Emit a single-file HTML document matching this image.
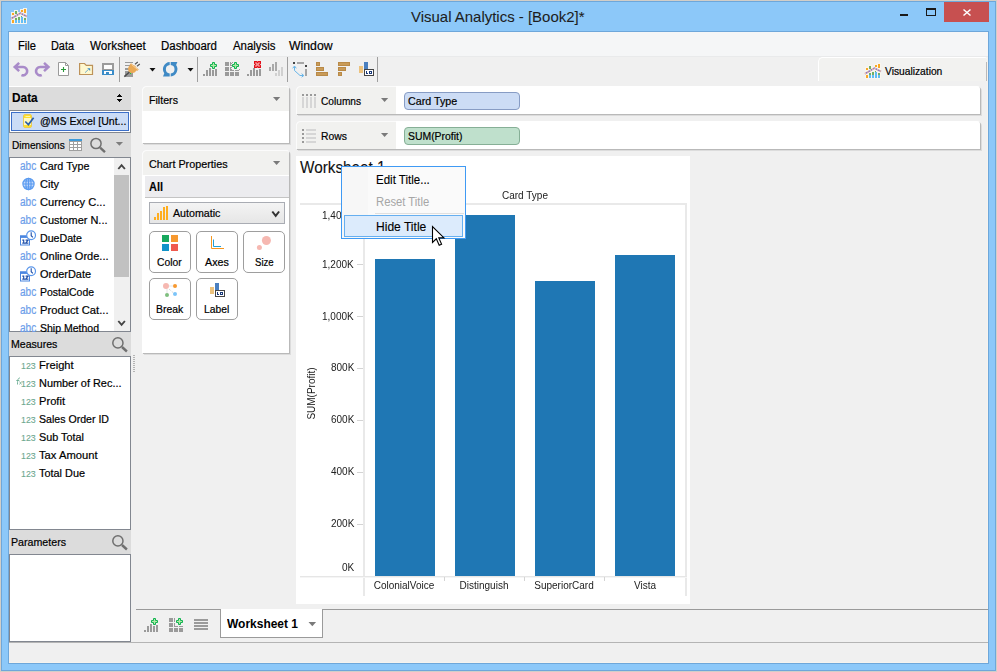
<!DOCTYPE html>
<html><head><meta charset="utf-8"><title>Visual Analytics</title>
<style>
*{box-sizing:border-box;margin:0;padding:0}
html,body{width:997px;height:672px;overflow:hidden}
body{font-family:"Liberation Sans",sans-serif;color:#000;background:#d2cec8;position:relative}
.a{position:absolute}
.t{position:absolute;white-space:nowrap;line-height:1;transform-origin:0 0;display:block}
.u{-webkit-text-stroke:.2px currentColor}
.g{will-change:transform}
.hdr{position:absolute;left:9px;width:122px;background:#dcdcdc}
.lb{position:absolute;left:9px;width:122px;background:#fff;border:1px solid #828790}
.card{position:absolute;background:#fff;border-radius:5px 3px 0 0;box-shadow:1px 1px 0 #b9b9b9,2px 2px 0 #dcdcdc}
.chd{position:absolute;left:0;top:0;background:#f1f1ef;border-radius:5px 0 0 0;border-left:1px solid #fbfbfb;border-top:1px solid #fbfbfb}
.btn{position:absolute;width:42px;height:42px;border:1px solid #9e9e9e;border-radius:5px;background:#fff}
.sep{position:absolute;top:57px;width:1px;height:25px;background:#9f9f9f}
.bar{position:absolute;background:#1f77b4;width:60px}
.gl{position:absolute;background:#e9e9e9}
</style></head><body>
<!-- window frame -->
<div class="a" style="left:1px;top:1px;width:995px;height:670px;background:#6ea7da"></div>
<div class="a" style="left:2px;top:2px;width:993px;height:668px;background:#8cc8f9"></div>
<div class="a" style="left:8px;top:31px;width:981px;height:633px;background:#6ea7da"></div>
<div class="a" style="left:9px;top:32px;width:979px;height:631px;background:#f0f0f0"></div>
<div class="a" style="left:987px;top:57px;width:1px;height:606px;background:#f6f3ee"></div><div class="a" style="left:9px;top:662px;width:979px;height:1px;background:#f6f3ee"></div>
<!-- caption buttons -->
<div class="a" style="left:900px;top:14px;width:8px;height:2px;background:#1a1a1a"></div>
<div class="a" style="left:926px;top:8px;width:10px;height:8px;border:1px solid #1a1a1a;border-top-width:2px"></div>
<div class="a" style="left:944px;top:2px;width:45px;height:20px;background:#c75050"></div>
<!-- menubar / toolbar -->
<div class="a" style="left:9px;top:32px;width:979px;height:24px;background:#f5f6f7"></div>
<div class="a" style="left:9px;top:56px;width:979px;height:1px;background:#e9eaeb"></div>
<div class="sep" style="left:119px"></div><div class="sep" style="left:197px"></div><div class="sep" style="left:287px"></div><div class="sep" style="left:377px"></div>
<!-- visualization tab -->
<div class="a" style="left:818px;top:57px;width:169px;height:24px;background:#f2f2f0;border-left:1px solid #fff;border-top:1px solid #fff;border-radius:5px 2px 0 0"></div>
<div class="a" style="left:986px;top:62px;width:1px;height:19px;background:#b9b9b9"></div>
<!-- left pane -->
<div class="a" style="left:9px;top:86px;width:122px;height:1px;background:#fff"></div>
<div class="hdr" style="top:87px;height:23px"></div>
<div class="a" style="left:9px;top:110px;width:122px;height:23px;border:1px solid #828790;background:#fff"></div>
<div class="a" style="left:11px;top:112px;width:118px;height:19px;border:1px solid #3c6fc8;background:#cbdcf6"></div>
<div class="hdr" style="top:133px;height:24px"></div>
<div class="lb" style="top:157px;height:175px"></div>
<div class="a" style="left:114px;top:158px;width:16px;height:173px;background:#f0f0f0"></div>
<div class="a" style="left:114px;top:175px;width:15px;height:102px;background:#c1c1c1"></div>
<div class="hdr" style="top:332px;height:24px"></div>
<div class="lb" style="top:356px;height:174px"></div>
<div class="hdr" style="top:530px;height:24px"></div>
<div class="lb" style="top:554px;height:88px"></div>
<!-- filters card -->
<div class="card" style="left:142px;top:86px;width:147px;height:57px"><div class="chd" style="width:147px;height:25px;border-radius:5px 3px 0 0"></div></div>
<!-- chart properties card -->
<div class="card" style="left:142px;top:150px;width:147px;height:203px"><div class="chd" style="width:147px;height:25px;border-radius:5px 3px 0 0"></div>
<div class="a" style="left:3px;top:26px;width:144px;height:21px;background:#ececef"></div>
<div class="a" style="left:3px;top:47px;width:144px;height:1px;background:#c4c4c4"></div>
<div class="a" style="left:7px;top:52px;width:136px;height:22px;border:1px solid #a9acb3;background:linear-gradient(#f4f4f4,#e6e6e6)"></div>
</div>
<div class="btn" style="left:149px;top:231px"></div><div class="btn" style="left:196px;top:231px"></div><div class="btn" style="left:243px;top:231px"></div>
<div class="btn" style="left:149px;top:278px"></div><div class="btn" style="left:196px;top:278px"></div>
<!-- columns / rows -->
<div class="card" style="left:296px;top:86px;width:684px;height:28px"><div class="chd" style="width:100px;height:28px"></div></div>
<div class="card" style="left:296px;top:121px;width:684px;height:28px"><div class="chd" style="width:100px;height:28px"></div></div>
<div class="a" style="left:404px;top:92px;width:116px;height:18px;border:1px solid #879cc4;border-radius:4px;background:#ccdcf5"></div>
<div class="a" style="left:404px;top:127px;width:116px;height:18px;border:1px solid #86af96;border-radius:4px;background:#bfe0cc"></div>
<!-- chart -->
<div class="a" style="left:296px;top:156px;width:394px;height:448px;background:#fff"></div>
<div class="gl" style="left:300px;top:203px;width:387px;height:2px"></div>
<div class="gl" style="left:685px;top:204px;width:2px;height:392px"></div>
<div class="gl" style="left:363px;top:204px;width:2px;height:392px"></div>
<div class="gl" style="left:300px;top:576px;width:387px;height:1px;background:#e6e6e6"></div><div class="gl" style="left:300px;top:577px;width:387px;height:1px;background:#f5f5f5"></div>
<div class="gl" style="left:444px;top:577px;width:1px;height:4px;background:#d4d4d4"></div><div class="gl" style="left:524px;top:577px;width:1px;height:4px;background:#d4d4d4"></div><div class="gl" style="left:604px;top:577px;width:1px;height:4px;background:#d4d4d4"></div>
<div class="gl" style="left:357px;top:264px;width:6px;height:1px;background:#d4d4d4"></div><div class="gl" style="left:357px;top:316px;width:6px;height:1px;background:#d4d4d4"></div>
<div class="gl" style="left:357px;top:368px;width:6px;height:1px;background:#d4d4d4"></div><div class="gl" style="left:357px;top:420px;width:6px;height:1px;background:#d4d4d4"></div>
<div class="gl" style="left:357px;top:472px;width:6px;height:1px;background:#d4d4d4"></div><div class="gl" style="left:357px;top:524px;width:6px;height:1px;background:#d4d4d4"></div>
<div class="bar" style="left:375px;top:259px;height:317px"></div>
<div class="bar" style="left:455px;top:215px;height:361px"></div>
<div class="bar" style="left:535px;top:281px;height:295px"></div>
<div class="bar" style="left:615px;top:255px;height:321px"></div>
<!-- sheet tab bar -->
<div class="a" style="left:136px;top:609px;width:852px;height:1px;background:#9a9a9a"></div>
<div class="a" style="left:220px;top:609px;width:103px;height:29px;background:#fff;border:1px solid #9a9a9a;border-top:none"></div>
<div class="a" style="left:9px;top:642px;width:979px;height:1px;background:#b4b4b4"></div>
<svg class="a" style="left:0;top:0" width="997" height="672" viewBox="0 0 997 672">
<defs>
<g id="appico">
 <path d="M0 4h3v-2h4v2h2v-3h3v-1h4v16h-16z" fill="#fbf6ee" fill-opacity=".92"/>
 <g shape-rendering="crispEdges">
 <rect x="1" y="5" width="2" height="2" fill="#f9a825"/><rect x="1" y="12" width="2" height="3" fill="#f9a825"/>
 <rect x="4" y="3" width="2" height="3" fill="#72b066"/><rect x="4" y="10" width="2" height="2" fill="#72b066"/><rect x="4" y="12" width="2" height="3" fill="#62bdf5"/>
 <rect x="7" y="9" width="2" height="3" fill="#72b066"/><rect x="7" y="12" width="2" height="3" fill="#62bdf5"/>
 <rect x="10" y="2" width="2" height="2" fill="#f9a825"/><rect x="10" y="9" width="2" height="6" fill="#62bdf5"/><rect x="10" y="8" width="1" height="1" fill="#72b066"/>
 <rect x="13" y="1" width="2" height="4" fill="#f9a825"/><rect x="13" y="10" width="2" height="2" fill="#72b066"/><rect x="13" y="12" width="2" height="3" fill="#62bdf5"/>
 </g>
 <path d="M0 10.7L9.4 5.1L16 8.6" fill="none" stroke="#8b78c4" stroke-width="1.7"/>
 <path d="M0 10.7L9.4 5.1L16 8.6" fill="none" stroke="#f9c9a8" stroke-width="1.7" stroke-dasharray="1.2 1.6"/>
</g>
<g id="plus"><path d="M2.5 0.5h2v2h2v2h-2v2h-2v-2h-2v-2h2z" fill="#b2e9a6" stroke="#10b250" stroke-width="1"/></g>
<g id="bars5" fill="#9a9a9a" shape-rendering="crispEdges">
 <rect x="0" y="12" width="2" height="2"/><rect x="3" y="8" width="2" height="6"/><rect x="6" y="6" width="2" height="8"/><rect x="9" y="8" width="2" height="6"/><rect x="12" y="7" width="2" height="7"/>
</g>
<g id="grid9" fill="#9a9a9a" shape-rendering="crispEdges">
 <rect x="0" y="0" width="4" height="4"/><rect x="5" y="0" width="4" height="4"/><rect x="10" y="0" width="4" height="4"/>
 <rect x="0" y="5" width="4" height="4"/><rect x="5" y="5" width="4" height="4"/><rect x="10" y="5" width="4" height="4"/>
 <rect x="0" y="10" width="4" height="4"/><rect x="5" y="10" width="4" height="4"/><rect x="10" y="10" width="4" height="4"/>
</g>
<g id="lblico" shape-rendering="crispEdges">
 <rect x="0" y="4" width="4" height="7" fill="#ecc27d"/><rect x="5" y="0" width="4" height="8" fill="#4a7fbf"/>
 <rect x="5.5" y="7.5" width="9" height="6" fill="#fff" stroke="#444" stroke-width="1"/>
 <rect x="7" y="9" width="1" height="3" fill="#1a3a7a"/><rect x="7" y="11" width="2" height="1" fill="#1a3a7a"/><rect x="10" y="9" width="3" height="3" fill="#1a3a7a"/><rect x="11" y="10" width="1" height="1" fill="#fff"/>
</g>
<g id="mag"><circle cx="6" cy="6" r="5.1" fill="none" stroke="#6f6f6f" stroke-width="1.5"/><path d="M10.1 10.1L15 14.6" stroke="#6f6f6f" stroke-width="2.4" stroke-linecap="butt"/></g>
<g id="abcdate">
 <rect x="0.5" y="5.5" width="9" height="9" fill="#fff" stroke="#4a86e0"/><rect x="0" y="5" width="10" height="2.4" fill="#4a86e0"/>
 <path d="M2.3 9.6h1.4v3.2M2.3 12.6h2.6M5.6 9.6h2.6L5.6 12.6h2.8" stroke="#1f4fa8" fill="none" stroke-width="1.15"/>
 <circle cx="11.1" cy="4.7" r="4.4" fill="#fff" stroke="#5a96ea" stroke-width="1.2"/><path d="M11.2 1.8V5.2L12.9 6.8" stroke="#1f4fa8" fill="none" stroke-width="1.1"/>
</g>
</defs>
<!-- title icon, viz icon -->
<use href="#appico" x="11" y="8"/>
<use href="#appico" x="865" y="63"/>
<!-- close X -->
<path d="M963.5 9.5L970.5 15.5M970.5 9.5L963.5 15.5" stroke="#fff" stroke-width="1.5"/>
<!-- TOOLBAR -->
<g id="undo"><path d="M12.9 67L18.3 62L20 63.7L18 65.7V68.3L20 70.3L18.3 72Z" fill="#a98bc9"/><path d="M17 67H23A4.2 4.2 0 1 1 21.4 75.1" fill="none" stroke="#a98bc9" stroke-width="2.6"/></g>
<use href="#undo" transform="translate(63.2 0) scale(-1 1)"/>
<!-- new doc -->
<path d="M58.5 62.5H65.5L68.5 65.5V75.5H58.5Z" fill="#fff" stroke="#9a9a9a"/><path d="M65.5 62.5V65.5H68.5" fill="none" stroke="#9a9a9a"/>
<path d="M63.5 67v5M61 69.5h5" stroke="#2a9a3a" stroke-width="1.1"/>
<!-- open folder -->
<path d="M79.6 63.5H84.5L86.3 65.4H92.5V74.5H79.6Z" fill="#fef8d0" stroke="#bd9259" stroke-width="1.2"/>
<path d="M85 72.7L88.6 69.3" fill="none" stroke="#3d8fc8" stroke-width="1" stroke-dasharray="1 .6"/><path d="M87.2 68.2H90.2V71z" fill="#3d8fc8"/>
<!-- save -->
<g shape-rendering="crispEdges"><rect x="102" y="63" width="12" height="7" fill="#9b9b9b"/><rect x="104" y="65" width="8" height="4" fill="#fdfdfd"/><rect x="102" y="70" width="12" height="5" fill="#3a8cc8"/><rect x="104" y="71" width="8" height="3" fill="#fdfdfd"/><rect x="106" y="72" width="3" height="2" fill="#3a8cc8"/></g>
<!-- connect (doc + plug) -->
<g shape-rendering="crispEdges"><rect x="125" y="62" width="8" height="1" fill="#9a9a9a"/><rect x="125" y="65" width="8" height="1" fill="#9a9a9a"/><rect x="125" y="68" width="8" height="2" fill="#9a9a9a"/><rect x="125" y="71" width="8" height="6" fill="#9a9a9a"/></g>
<path d="M124.3 76.6L129.5 72" stroke="#4d4d4d" stroke-width="1.5"/>
<path d="M135 64.2L137.8 62M137 66.2L139.8 64" stroke="#555" stroke-width="1.2"/>
<circle cx="132.2" cy="69" r="4.1" fill="#eaa955"/>
<path d="M131 63.3L138.8 69.6L137 71L129.6 65z" fill="#eaa955"/>
<path d="M131.6 64.6L137.8 69.6" stroke="#f6d4a4" stroke-width=".9"/>
<rect x="130" y="73" width="1" height="1" fill="#1fd01f"/>
<path d="M149.5 68h6l-3 3.5z" fill="#111"/><path d="M187.5 68h6l-3 3.5z" fill="#111"/>
<!-- refresh -->
<path id="rf" d="M169.7 62A7.2 7.2 0 0 0 164.3 73.3L163 76.4H169.7V73.5A4.33 4.33 0 0 1 169.7 64.9Z" fill="#3f8ac5"/>
<use href="#rf" transform="rotate(180 170.2 69.2)"/>
<!-- new worksheet / dashboard / clear / bars -->
<use href="#bars5" x="203" y="62"/><use href="#plus" x="210" y="62"/>
<use href="#grid9" x="225" y="62"/><rect x="231" y="61" width="9" height="9" fill="#f0f0f0"/><path d="M231.5 70v-7.5h2M236 70.5h3.5v-2" fill="none" stroke="#9a9a9a" stroke-dasharray="1 1"/><use href="#plus" x="232" y="62"/>
<use href="#bars5" x="247" y="62"/>
<path d="M254.6 61.6h2l.9 1 .9-1h2v2l-1 .9 1 .9v2h-2l-.9-1-.9 1h-2v-2l1-.9-1-.9z" fill="#f59a9a" stroke="#e30f19" stroke-width="1.2" stroke-linejoin="miter"/>
<g shape-rendering="crispEdges"><rect x="269" y="67" width="2" height="4" fill="#a9a9a9"/><rect x="272" y="64" width="2" height="7" fill="#a9a9a9"/><rect x="275" y="62" width="2" height="9" fill="#a9a9a9"/>
<rect x="275" y="73" width="2" height="3" fill="#d0d0d0"/><rect x="278" y="70" width="2" height="6" fill="#d0d0d0"/><rect x="281" y="67" width="2" height="9" fill="#d0d0d0"/></g>
<!-- swap -->
<g shape-rendering="crispEdges"><rect x="293" y="62" width="2" height="2" fill="#444"/><rect x="297" y="62" width="7" height="2" fill="#a6a6a6"/><rect x="305" y="65" width="2" height="2" fill="#444"/><rect x="305" y="69" width="2" height="7" fill="#a6a6a6"/></g>
<path d="M294.5 67V70.5L300 75.5H303" fill="none" stroke="#58aee6" stroke-width=".9"/><path d="M292.7 68.3L294.5 66L296.3 68.3M301.6 73.7L303.8 75.5L301.6 77.2" fill="none" stroke="#58aee6" stroke-width=".9"/>
<!-- sort asc / desc -->
<g fill="#c99b58" stroke="#b98a48" stroke-width="1" shape-rendering="crispEdges">
<rect x="316.5" y="62.5" width="3" height="3"/><rect x="316.5" y="67.5" width="7" height="3"/><rect x="316.5" y="72.5" width="11" height="3"/>
<rect x="338.5" y="62.5" width="11" height="3"/><rect x="338.5" y="67.5" width="7" height="3"/><rect x="338.5" y="72.5" width="3" height="3"/></g>
<use href="#lblico" x="359" y="62"/>
<!-- LEFT PANE icons -->
<g shape-rendering="crispEdges" fill="#0a0a0a"><rect x="117" y="97" width="5" height="2" fill="#e9e9e9"/><rect x="119" y="94" width="1" height="1"/><rect x="118" y="95" width="3" height="1"/><rect x="117" y="96" width="5" height="1"/><rect x="117" y="99" width="5" height="1"/><rect x="118" y="100" width="3" height="1"/><rect x="119" y="101" width="1" height="1"/></g>
<!-- datasource icon -->
<rect x="23.5" y="114.5" width="8" height="13" rx="1.5" fill="#fdf8c2" stroke="#e8c955"/><rect x="24" y="115" width="7" height="3" fill="#fddf2f"/><rect x="24" y="125" width="7" height="2" fill="#fddf2f"/><rect x="25.5" y="116" width="4.5" height="1" fill="#fff4a8"/>
<path d="M25.3 121.5L28.4 124.6L33.6 117.8" fill="none" stroke="#2a5fa8" stroke-width="1.7"/>
<!-- table icon -->
<g shape-rendering="crispEdges"><rect x="69" y="139" width="13" height="12" fill="#9f9f9f"/><rect x="69" y="139" width="13" height="2" fill="#3f9bd9"/>
<rect x="70" y="142" width="3" height="2" fill="#fff"/><rect x="74" y="142" width="3" height="2" fill="#fff"/><rect x="78" y="142" width="3" height="2" fill="#fff"/>
<rect x="70" y="145" width="3" height="2" fill="#fff"/><rect x="74" y="145" width="3" height="2" fill="#fff"/><rect x="78" y="145" width="3" height="2" fill="#fff"/>
<rect x="70" y="148" width="3" height="2" fill="#fff"/><rect x="74" y="148" width="3" height="2" fill="#fff"/><rect x="78" y="148" width="3" height="2" fill="#fff"/></g>
<use href="#mag" x="90" y="137.5"/>
<path d="M115.8 142h7.2l-3.6 3.8z" fill="#7d7d7d"/>
<use href="#mag" x="111.9" y="336.9"/><use href="#mag" x="111.9" y="534.9"/>
<!-- scrollbar arrows -->
<path d="M118.3 169L121.6 165.2L124.9 169" fill="none" stroke="#444" stroke-width="1.9"/>
<path d="M118.3 321L121.6 324.8L124.9 321" fill="none" stroke="#444" stroke-width="1.9"/>
<!-- globe -->
<g fill="none" stroke="#5b9bf0" stroke-width="1.2"><circle cx="28.5" cy="184" r="5.6" fill="#c3d9fb"/><ellipse cx="28.5" cy="184" rx="2.6" ry="5.6"/><path d="M23 184h11M24 181h9M24 187h9M28.5 178.4v11.2"/></g>
<use href="#abcdate" x="20" y="230.5"/><use href="#abcdate" x="20" y="266.5"/>
<!-- fx marker -->
<path d="M17.5 384.5c0-5 .5-6.5 2.5-6.5M16.3 380.5h3" fill="none" stroke="#6aab92" stroke-width=".9"/><path d="M19.5 381.5l2 3M21.5 381.5l-2 3" stroke="#6aab92" stroke-width=".7"/>
<!-- CARD icons -->
<path d="M273 97h7.2l-3.6 4z" fill="#7a7a7a"/><path d="M273 161h7.2l-3.6 4z" fill="#7a7a7a"/>
<path d="M381 98h7.2l-3.6 4z" fill="#7a7a7a"/><path d="M381 133h7.2l-3.6 4z" fill="#7a7a7a"/>
<g shape-rendering="crispEdges">
<rect x="302" y="94" width="2" height="2" fill="#9a9a9a"/><rect x="306" y="94" width="2" height="2" fill="#9a9a9a"/><rect x="310" y="94" width="2" height="2" fill="#9a9a9a"/><rect x="314" y="94" width="2" height="2" fill="#9a9a9a"/>
<rect x="302" y="97" width="2" height="11" fill="#d6d6d6"/><rect x="306" y="97" width="2" height="11" fill="#d6d6d6"/><rect x="310" y="97" width="2" height="11" fill="#d6d6d6"/><rect x="314" y="97" width="2" height="11" fill="#d6d6d6"/>
<rect x="302" y="129" width="2" height="2" fill="#9a9a9a"/><rect x="302" y="133" width="2" height="2" fill="#9a9a9a"/><rect x="302" y="137" width="2" height="2" fill="#9a9a9a"/><rect x="302" y="141" width="2" height="2" fill="#9a9a9a"/>
<rect x="306" y="129" width="10" height="2" fill="#d6d6d6"/><rect x="306" y="133" width="10" height="2" fill="#d6d6d6"/><rect x="306" y="137" width="10" height="2" fill="#d6d6d6"/><rect x="306" y="141" width="10" height="2" fill="#d6d6d6"/>
<!-- automatic icon -->
<rect x="154" y="217" width="2" height="3" fill="#ffae1f"/><rect x="157" y="213" width="2" height="7" fill="#ffae1f"/><rect x="160" y="211" width="2" height="9" fill="#ffae1f"/><rect x="163" y="207" width="2" height="13" fill="#ffae1f"/><rect x="166" y="206" width="2" height="14" fill="#ffae1f"/>
<!-- color squares -->
<rect x="162" y="235" width="7" height="7" fill="#17a85d"/><rect x="171" y="235" width="7" height="7" fill="#f7992f"/><rect x="162" y="244" width="7" height="7" fill="#1193c9"/><rect x="171" y="244" width="7" height="7" fill="#ef5a4f"/>
</g>
<path d="M272.3 211.5L275.7 215.8L279.1 211.5" fill="none" stroke="#333" stroke-width="2"/>
<!-- axes -->
<path d="M211.5 236V248.5H224" fill="none" stroke="#f5961f" stroke-width="1"/><path d="M213.5 239.5V246.5H221" fill="none" stroke="#1ea0d8" stroke-width="1"/>
<!-- size -->
<circle cx="266.4" cy="240.5" r="4.5" fill="#f6b8b1"/><circle cx="259.4" cy="247.5" r="2.5" fill="#f6b8b1"/>
<!-- break -->
<circle cx="166" cy="286" r="3" fill="#f6b8b1"/><circle cx="175" cy="286" r="2" fill="#f7992f"/><circle cx="167" cy="295" r="2" fill="#7fbf7f"/><circle cx="175" cy="294" r="2" fill="#7cc4f8"/>
<path d="M169.5 286H172.5M167 289.5V292.5M169 289L173 292.5" stroke="#bdbdbd" stroke-width=".8" stroke-dasharray="1 1"/>
<use href="#lblico" x="210" y="283"/>
<!-- splitter grip -->
<path d="M134 355V372" stroke="#b4b4b4" stroke-width="2" stroke-dasharray="1 1"/>
<!-- TAB BAR icons -->
<use href="#bars5" x="144" y="618"/><use href="#plus" x="151" y="618"/>
<use href="#grid9" x="169" y="618"/><rect x="175" y="617" width="9" height="9" fill="#f0f0f0"/><use href="#plus" x="176" y="618"/>
<g shape-rendering="crispEdges" fill="#9a9a9a"><rect x="194" y="619" width="14" height="2"/><rect x="194" y="622" width="14" height="2"/><rect x="194" y="625" width="14" height="2"/><rect x="194" y="628" width="14" height="2"/></g>
<path d="M308.5 622h7.6l-3.8 4.2z" fill="#7a7a7a"/>
</svg>

<span class="t u" style="top:9.00px;font-size:15px;left:411px;transform:scaleX(0.9972);color:#1e1e1e;-webkit-text-stroke:.08px">Visual Analytics - [Book2]*</span>
<span class="t u" style="top:40.00px;font-size:12px;left:18.3px;transform:scaleX(0.9305);">File</span>
<span class="t u" style="top:40.00px;font-size:12px;left:51.3px;transform:scaleX(0.9070);">Data</span>
<span class="t u" style="top:40.00px;font-size:12px;left:89.9px;transform:scaleX(0.9765);">Worksheet</span>
<span class="t u" style="top:40.00px;font-size:12px;left:161.4px;transform:scaleX(0.9537);">Dashboard</span>
<span class="t u" style="top:40.00px;font-size:12px;left:232.5px;transform:scaleX(0.9510);">Analysis</span>
<span class="t u" style="top:40.00px;font-size:12px;left:289.4px;transform:scaleX(1.0214);">Window</span>
<span class="t u" style="top:66.00px;font-size:11px;left:885px;transform:scaleX(0.9308);">Visualization</span>
<span class="t u" style="top:92.00px;font-size:12px;left:12.4px;transform:scaleX(0.9879);font-weight:bold;-webkit-text-stroke:.12px">Data</span>
<span class="t u" style="top:116.00px;font-size:11px;left:39.8px;transform:scaleX(0.9597);">@MS Excel [Unt...</span>
<span class="t u" style="top:140.00px;font-size:11px;left:11.5px;transform:scaleX(0.9170);">Dimensions</span>
<span class="t u" style="top:339.00px;font-size:11px;left:11.3px;transform:scaleX(0.9607);">Measures</span>
<span class="t u" style="top:537.00px;font-size:11px;left:11.3px;transform:scaleX(0.9673);">Parameters</span>
<span class="t u" style="top:161.00px;font-size:11px;left:39.5px;transform:scaleX(0.9790);z-index:1">Card Type</span>
<span class="t u" style="top:160.00px;font-size:12px;left:19.9px;transform:scaleX(0.8368);color:#6c9eea;z-index:1">abc</span>
<span class="t u" style="top:179.00px;font-size:11px;left:39.5px;transform:scaleX(1.0025);z-index:1">City</span>
<span class="t u" style="top:197.00px;font-size:11px;left:39.5px;transform:scaleX(1.0109);z-index:1">Currency C...</span>
<span class="t u" style="top:196.00px;font-size:12px;left:19.9px;transform:scaleX(0.8368);color:#6c9eea;z-index:1">abc</span>
<span class="t u" style="top:215.00px;font-size:11px;left:39.5px;transform:scaleX(0.9947);z-index:1">Customer N...</span>
<span class="t u" style="top:214.00px;font-size:12px;left:19.9px;transform:scaleX(0.8368);color:#6c9eea;z-index:1">abc</span>
<span class="t u" style="top:233.00px;font-size:11px;left:39.5px;transform:scaleX(0.9673);z-index:1">DueDate</span>
<span class="t u" style="top:251.00px;font-size:11px;left:39.5px;transform:scaleX(1.0002);z-index:1">Online Orde...</span>
<span class="t u" style="top:250.00px;font-size:12px;left:19.9px;transform:scaleX(0.8368);color:#6c9eea;z-index:1">abc</span>
<span class="t u" style="top:269.00px;font-size:11px;left:39.5px;transform:scaleX(0.9930);z-index:1">OrderDate</span>
<span class="t u" style="top:287.00px;font-size:11px;left:39.5px;transform:scaleX(0.9495);z-index:1">PostalCode</span>
<span class="t u" style="top:286.00px;font-size:12px;left:19.9px;transform:scaleX(0.8368);color:#6c9eea;z-index:1">abc</span>
<span class="t u" style="top:305.00px;font-size:11px;left:39.5px;transform:scaleX(1.0184);z-index:1">Product Cat...</span>
<span class="t u" style="top:304.00px;font-size:12px;left:19.9px;transform:scaleX(0.8368);color:#6c9eea;z-index:1">abc</span>
<span class="t u" style="top:323.00px;font-size:11px;left:39.5px;transform:scaleX(0.9552);z-index:1">Ship Method</span>
<span class="t u" style="top:322.00px;font-size:12px;left:19.9px;transform:scaleX(0.8368);color:#6c9eea;z-index:1">abc</span>
<span class="t u" style="top:360.00px;font-size:11px;left:39.1px;transform:scaleX(1.0102);">Freight</span>
<span class="t u" style="top:362.00px;font-size:9px;left:20.8px;transform:scaleX(0.9780);color:#6ca78f;-webkit-text-stroke:.1px">123</span>
<span class="t u" style="top:378.00px;font-size:11px;left:39.1px;transform:scaleX(0.9923);">Number of Rec...</span>
<span class="t u" style="top:380.00px;font-size:9px;left:20.8px;transform:scaleX(0.9780);color:#6ca78f;-webkit-text-stroke:.1px">123</span>
<span class="t u" style="top:396.00px;font-size:11px;left:39.1px;transform:scaleX(1.0122);">Profit</span>
<span class="t u" style="top:398.00px;font-size:9px;left:20.8px;transform:scaleX(0.9780);color:#6ca78f;-webkit-text-stroke:.1px">123</span>
<span class="t u" style="top:414.00px;font-size:11px;left:39.1px;transform:scaleX(0.9622);">Sales Order ID</span>
<span class="t u" style="top:416.00px;font-size:9px;left:20.8px;transform:scaleX(0.9780);color:#6ca78f;-webkit-text-stroke:.1px">123</span>
<span class="t u" style="top:432.00px;font-size:11px;left:39.1px;transform:scaleX(0.9853);">Sub Total</span>
<span class="t u" style="top:434.00px;font-size:9px;left:20.8px;transform:scaleX(0.9780);color:#6ca78f;-webkit-text-stroke:.1px">123</span>
<span class="t u" style="top:450.00px;font-size:11px;left:39.1px;transform:scaleX(1.0177);">Tax Amount</span>
<span class="t u" style="top:452.00px;font-size:9px;left:20.8px;transform:scaleX(0.9780);color:#6ca78f;-webkit-text-stroke:.1px">123</span>
<span class="t u" style="top:468.00px;font-size:11px;left:39.1px;transform:scaleX(0.9896);">Total Due</span>
<span class="t u" style="top:470.00px;font-size:9px;left:20.8px;transform:scaleX(0.9780);color:#6ca78f;-webkit-text-stroke:.1px">123</span>
<span class="t u" style="top:95.00px;font-size:11px;left:148.6px;transform:scaleX(0.9682);">Filters</span>
<span class="t u" style="top:159.00px;font-size:11px;left:148.6px;transform:scaleX(0.9813);">Chart Properties</span>
<span class="t u" style="top:181.00px;font-size:12px;left:149px;transform:scaleX(0.9124);font-weight:bold;-webkit-text-stroke:.15px">All</span>
<span class="t u" style="top:208.00px;font-size:11px;left:172.7px;transform:scaleX(0.9689);">Automatic</span>
<span class="t u" style="top:257.00px;font-size:11px;left:157.4px;transform:scaleX(0.9355);">Color</span>
<span class="t u" style="top:257.00px;font-size:11px;left:204.9px;transform:scaleX(0.9727);">Axes</span>
<span class="t u" style="top:257.00px;font-size:11px;left:254.6px;transform:scaleX(0.8736);">Size</span>
<span class="t u" style="top:304.00px;font-size:11px;left:156.3px;transform:scaleX(0.9461);">Break</span>
<span class="t u" style="top:304.00px;font-size:11px;left:204.2px;transform:scaleX(0.9360);">Label</span>
<span class="t u" style="top:96.00px;font-size:11px;left:320.5px;transform:scaleX(0.9238);">Columns</span>
<span class="t u" style="top:131.00px;font-size:11px;left:320.5px;transform:scaleX(0.9413);">Rows</span>
<span class="t u" style="top:96.00px;font-size:11px;left:407.8px;transform:scaleX(0.9731);">Card Type</span>
<span class="t u" style="top:131.00px;font-size:11px;left:407.8px;transform:scaleX(0.9469);">SUM(Profit)</span>
<span class="t" style="top:618.00px;font-size:12px;left:226.5px;transform:scaleX(0.9980);font-weight:bold;-webkit-text-stroke:0">Worksheet 1</span>
<span class="t u" style="top:160.00px;font-size:16px;left:300px;transform:scaleX(0.9561);color:#111;-webkit-text-stroke:.1px">Worksheet 1</span>
<span class="t u" style="top:174.00px;font-size:12px;left:375.6px;transform:scaleX(0.9602);z-index:6;-webkit-text-stroke:.12px">Edit Title...</span>
<span class="t" style="top:196.00px;font-size:12px;left:375.6px;transform:scaleX(0.9382);z-index:6;color:#a6a6a6;-webkit-text-stroke:0">Reset Title</span>
<span class="t u" style="top:221.00px;font-size:12px;left:375.6px;transform:scaleX(1.0054);z-index:6;-webkit-text-stroke:.12px">Hide Title</span>
<!-- context menu -->
<div class="a" style="left:341px;top:166px;width:125px;height:73px;background:#fafafa;border:1px solid #3f9af4;z-index:5">
 <div class="a" style="left:0;top:0;width:26px;height:71px;background:#f7f7f7"></div>
 <div class="a" style="left:33px;top:46px;width:89px;height:1px;background:#e0e0e0"></div>
 <div class="a" style="left:2px;top:48px;width:119px;height:22px;border:1px solid #66aff0;background:#dcebfc"></div>
</div>
<svg class="a" style="left:430px;top:224px;z-index:9" width="16" height="24" viewBox="0 0 16 24"><path d="M2.5 2.5V18.5L6.3 14.8L9.2 21.3L11.6 20.2L8.8 13.9H14Z" fill="#fff" stroke="#000" stroke-width="1.1" stroke-linejoin="miter"/></svg>

<span class="t g" style="top:191.00px;font-size:10px;left:502px;color:#222">Card Type</span>
<span class="t g" style="top:211.00px;font-size:10px;color:#222;right:643px">1,400K</span>
<span class="t g" style="top:260.00px;font-size:10px;color:#222;right:643px">1,200K</span>
<span class="t g" style="top:312.00px;font-size:10px;color:#222;right:643px">1,000K</span>
<span class="t g" style="top:363.00px;font-size:10px;color:#222;right:643px">800K</span>
<span class="t g" style="top:415.00px;font-size:10px;color:#222;right:643px">600K</span>
<span class="t g" style="top:467.00px;font-size:10px;color:#222;right:643px">400K</span>
<span class="t g" style="top:519.00px;font-size:10px;color:#222;right:643px">200K</span>
<span class="t g" style="top:563.00px;font-size:10px;color:#222;right:643px">0K</span>
<span class="t g" style="top:581.00px;font-size:10px;color:#222;left:353.8px;width:100px;text-align:center">ColonialVoice</span>
<span class="t g" style="top:581.00px;font-size:10px;color:#222;left:434px;width:100px;text-align:center">Distinguish</span>
<span class="t g" style="top:581.00px;font-size:10px;color:#222;left:514px;width:100px;text-align:center">SuperiorCard</span>
<span class="t g" style="top:581.00px;font-size:10px;color:#222;left:594.5px;width:100px;text-align:center">Vista</span>
<div class="t g" style="left:307px;top:420px;font-size:10px;color:#222;transform:rotate(-90deg);transform-origin:0 0;width:53px;text-align:center">SUM(Profit)</div>
</body></html>
